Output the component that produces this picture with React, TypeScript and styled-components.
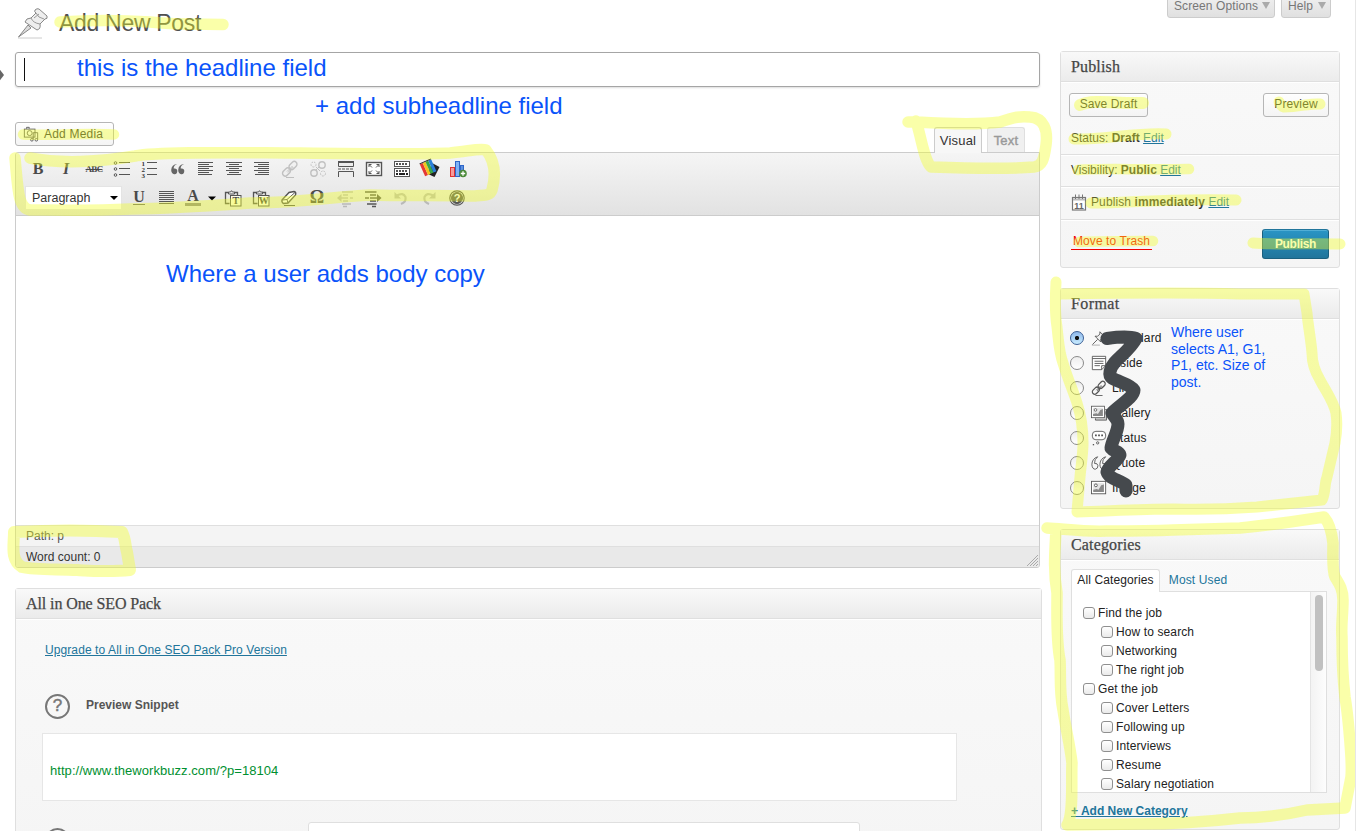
import React from "react";
import styled, { createGlobalStyle, css } from "styled-components";

const Global = createGlobalStyle`
  * { box-sizing: border-box; }
  html, body { margin: 0; padding: 0; background: #fff; overflow: hidden; }
  body { font-family: "Liberation Sans", Arial, sans-serif; font-size: 12px; color: #333; }
`;

const Page = styled.div`
  position: relative;
  display: flex;
  width: 1356px;
  height: 831px;
  padding-left: 15px;
  overflow: hidden;
  border-right: 1px solid #e6e6e6;
  white-space: nowrap;
`;
const Main = styled.main`
  width: 1027px;
  flex: none;
  display: flex;
  flex-direction: column;
`;
const Side = styled.aside`
  width: 280px;
  flex: none;
  margin-left: 18px;
  display: flex;
  flex-direction: column;
`;

/* Page heading */
const Heading = styled.header`
  display: flex;
  height: 52px;
  padding: 7px 0 0 2px;
  flex: none;
`;
const H1 = styled.h1`
  margin: 0 0 0 10px;
  font: 400 23px/32px "Liberation Sans", sans-serif;
  letter-spacing: -0.3px;
  color: #505050;
`;
const TitleField = styled.div`
  width: 1025px;
  height: 35px;
  flex: none;
  border: 1px solid #a5a5a5;
  border-radius: 3px;
  box-shadow: 0 1px 2px #ddd;
  padding: 5px 8px;
`;
const Caret = styled.div`
  width: 1px;
  height: 23px;
  background: #111;
`;

const EditorTop = styled.div`
  width: 1025px;
  height: 65px;
  flex: none;
  display: flex;
  align-items: flex-end;
  justify-content: space-between;
  padding-right: 15px;
`;
const Button = styled.button<{ $w: number }>`
  display: flex;
  align-items: center;
  justify-content: center;
  gap: 5px;
  width: ${(p) => p.$w}px;
  height: 24px;
  padding: 0;
  border: 1px solid #b6b6b6;
  border-radius: 3px;
  background: linear-gradient(#fefefe, #f4f4f4);
  box-shadow: inset 0 1px 0 #fff;
  font: 12px "Liberation Sans", sans-serif;
  letter-spacing: 0.05px;
  color: #333;
  svg { overflow: visible; }
`;
const MediaSlot = styled.div`
  height: 30px;
`;
const MediaButton = styled(Button)`
  justify-content: flex-start;
  padding-left: 7px;
  letter-spacing: 0.2px;
`;
const Tabs = styled.div`
  display: flex;
  align-items: flex-end;
  gap: 5px;
`;
const Tab = styled.div<{ $active?: boolean }>`
  width: ${(p) => (p.$active ? 48 : 38)}px;
  height: ${(p) => (p.$active ? 26 : 25)}px;
  margin-bottom: ${(p) => (p.$active ? -1 : 0)}px;
  position: relative;
  border: 1px solid ${(p) => (p.$active ? "#ccc" : "#dfdfdf")};
  border-bottom: 0;
  border-radius: 3px 3px 0 0;
  background: ${(p) => (p.$active ? "#f7f7f7" : "#f0f0f0")};
  color: ${(p) => (p.$active ? "#333" : "#999")};
  font-size: 13px;
  letter-spacing: 0.2px;
  -webkit-text-stroke: ${(p) => (p.$active ? 0 : 0.4)}px #999;
  line-height: 26px;
  text-align: center;
`;

/* Editor */
const Editor = styled.section`
  width: 1025px;
  height: 416px;
  flex: none;
  display: flex;
  flex-direction: column;
  border: 1px solid #ccc;
  border-radius: 3px 0 3px 3px;
  overflow: hidden;
`;
const Toolbar = styled.div`
  height: 63px;
  flex: none;
  padding: 1px 0 0 8px;
  border-bottom: 1px solid #ccc;
  background: linear-gradient(#f5f5f5, #e2e2e2);
`;
const ToolRow = styled.div`
  display: flex;
  align-items: center;
  height: 29px;
`;
const Cell = styled.span<{ $w?: number; $dim?: boolean }>`
  width: ${(p) => p.$w ?? 28}px;
  height: 24px;
  display: flex;
  align-items: center;
  justify-content: center;
  opacity: ${(p) => (p.$dim ? 0.3 : 1)};
  svg { overflow: visible; }
`;
const Glyph = styled.span<{ $italic?: boolean; $size?: number; $under?: boolean; $strike?: boolean }>`
  font: ${(p) => (p.$italic ? "italic" : "normal")} bold ${(p) => p.$size ?? 16}px "Liberation Serif", serif;
  color: #4a4a4a;
  ${(p) => p.$under && css`line-height: 14px; border-bottom: 1px solid #666;`}
  ${(p) => p.$strike && css`text-decoration: line-through; letter-spacing: -0.7px;`}
`;
const Select = styled.div`
  width: 97px;
  height: 24px;
  margin: 0 3px 0 1px;
  padding: 0 3px 0 6px;
  display: flex;
  align-items: center;
  justify-content: space-between;
  border: 1px solid #e4e4e4;
  background: #fff;
  font-size: 12.500px;
`;
const Body = styled.div`
  flex: 1;
  background: #fff;
`;
const PathBar = styled.div`
  height: 21px;
  padding-left: 10px;
  border-top: 1px solid #dfdfdf;
  background: #f4f4f4;
  line-height: 20px;
  color: #555;
`;
const CountBar = styled.div`
  height: 21px;
  padding-left: 10px;
  display: flex;
  justify-content: space-between;
  align-items: flex-end;
  border-top: 1px solid #dfdfdf;
  background: #e9e9e9;
  line-height: 19px;
`;

/* Boxes */
const Box = styled.section<{ $h: number; $mt?: number }>`
  height: ${(p) => p.$h}px;
  margin-top: ${(p) => p.$mt ?? 0}px;
  flex: none;
  display: flex;
  flex-direction: column;
  border: 1px solid #dfdfdf;
  border-radius: 3px;
  background: linear-gradient(#f9f9f9, #f5f5f5);
`;
const BoxTitle = styled.h3<{ $ls?: number }>`
  margin: 0;
  height: 30px;
  flex: none;
  padding-left: 10px;
  border-bottom: 1px solid #dfdfdf;
  box-shadow: 0 1px 0 #fff;
  background: linear-gradient(#f9f9f9, #ebebeb);
  font: 16px/30px "Liberation Serif", serif;
  letter-spacing: ${(p) => p.$ls ?? 0.15}px;
  -webkit-text-stroke: 0.25px #464646;
  color: #464646;
`;
const Link = styled.a<{ $bold?: boolean; $ls?: number }>`
  color: #21759b;
  text-decoration: underline;
  font-weight: ${(p) => (p.$bold ? "bold" : "normal")};
  letter-spacing: ${(p) => p.$ls ?? 0}px;
`;

const SeoBody = styled.div`
  display: flex;
  flex-direction: column;
  align-items: flex-start;
  padding: 24px 0 0 29px;
`;
const SnippetHead = styled.div`
  display: flex;
  align-items: center;
  gap: 16px;
  height: 26px;
  margin-top: 36px;
  font-weight: bold;
  color: #555;
`;
const SnippetLabel = styled.span`
  padding-bottom: 2px;
`;
const Help = styled.span`
  width: 25px;
  height: 25px;
  display: flex;
  align-items: center;
  justify-content: center;
  border: 2px solid #777;
  border-radius: 50%;
  font: 17px "Liberation Sans", sans-serif;
  -webkit-text-stroke: 0.5px #777;
  color: #777;
`;
const Snippet = styled.div`
  width: 915px;
  height: 68px;
  margin: 14px 0 0 -3px;
  padding: 3px 0 0 7px;
  border: 1px solid #e6e6e6;
  background: #fff;
  color: #009030;
  font-size: 13px;
  letter-spacing: 0.05px;
  line-height: 68px;
`;
const NextRow = styled.div`
  display: flex;
  align-items: flex-start;
  margin-top: 21px;
`;
const NextField = styled.div`
  width: 552px;
  height: 30px;
  margin-left: 238px;
  border: 1px solid #dfdfdf;
  border-radius: 3px;
  background: #fff;
`;
const NextHelp = styled.div`
  padding-top: 6px;
`;

/* Sidebar */
const ScreenLinks = styled.nav`
  display: flex;
  gap: 6px;
  justify-content: flex-end;
  height: 51px;
  padding-right: 9px;
`;
const ScreenLink = styled.div<{ $w: number }>`
  width: ${(p) => p.$w}px;
  height: 22px;
  margin-top: -4px;
  display: flex;
  align-items: center;
  justify-content: space-between;
  padding: 0 4px 3px 6px;
  border: 1px solid #ccc;
  border-radius: 0 0 3px 3px;
  background: linear-gradient(#efefef, #e0e0e0);
  color: #777;
  letter-spacing: 0.1px;
`;
const Arrow = styled.i<{ $c: string; $s?: number }>`
  border: ${(p) => p.$s ?? 4}px solid transparent;
  border-top: ${(p) => (p.$s ? p.$s : 7)}px solid ${(p) => p.$c};
  border-bottom: 0;
`;
const Actions = styled.div`
  display: flex;
  justify-content: space-between;
  padding: 11px 10px 0 8px;
  height: 41px;
  button { padding-bottom: 2px; letter-spacing: 0.1px; }
`;
const Info = styled.div<{ $h: number }>`
  display: flex;
  align-items: center;
  gap: 4px;
  height: ${(p) => p.$h}px;
  padding: 0 0 2px 10px;
  border-bottom: 1px solid #dfdfdf;
  box-shadow: 0 1px 0 #fff;
`;
const Schedule = styled.span`
  letter-spacing: 0.1px;
`;
const Final = styled.div`
  display: flex;
  align-items: flex-start;
  justify-content: space-between;
  padding: 9px 10px 0 10px;
`;
const Trash = styled.a`
  margin-top: 4px;
  padding: 0 2px;
  height: 17px;
  line-height: 16px;
  letter-spacing: 0.08px;
  border-bottom: 1px solid #f00000;
  color: #f00000;
`;
const Primary = styled.button`
  width: 67px;
  height: 30px;
  padding: 0;
  border: 1px solid #1b607f;
  border-top-color: #21759b;
  border-radius: 3px;
  background: linear-gradient(#2a95c5, #21759b);
  box-shadow: inset 0 1px 0 rgba(120, 200, 230, 0.5);
  font: bold 12px "Liberation Sans", sans-serif;
  letter-spacing: -0.3px;
  color: #fff;
`;
const Formats = styled.div`
  display: flex;
  flex-direction: column;
  padding: 6px 0 0 9px;
`;
const FormatRow = styled.label`
  display: flex;
  align-items: center;
  height: 25px;
  color: #222;
  letter-spacing: 0.1px;
`;
const Radio = styled.span<{ $on?: boolean }>`
  width: 14px;
  height: 14px;
  margin-right: 7px;
  border: 1px solid ${(p) => (p.$on ? "#3c5f95" : "#8a8a8a")};
  border-radius: 50%;
  background: ${(p) =>
    p.$on
      ? "radial-gradient(circle, #111 0 1.7px, transparent 2.5px), linear-gradient(#8fb8ea, #c8ecff)"
      : "linear-gradient(#eee, #fff)"};
`;
const FormatLabel = styled.span`
  margin-left: 5px;
`;
const CatTabs = styled.div`
  display: flex;
  height: 23px;
  margin: 9px 0 0 10px;
`;
const CatTab = styled.div<{ $active?: boolean }>`
  position: relative;
  z-index: 1;
  height: 23px;
  line-height: ${(p) => (p.$active ? 21 : 23)}px;
  width: ${(p) => (p.$active ? 89 : 76)}px;
  text-align: center;
  letter-spacing: 0.12px;
  color: ${(p) => (p.$active ? "#222" : "#21759b")};
  ${(p) => p.$active && css`border: 1px solid #dfdfdf; border-bottom: 0; border-radius: 3px 3px 0 0; background: #fff;`}
`;
const CatPanel = styled.div`
  display: flex;
  justify-content: space-between;
  width: 256px;
  height: 202px;
  margin: -1px 0 0 10px;
  border: 1px solid #dfdfdf;
  background: #fff;
  overflow: hidden;
`;
const CatList = styled.div`
  padding: 11px 0 0 11px;
`;
const CatRow = styled.label<{ $child?: boolean }>`
  display: flex;
  align-items: center;
  height: 19px;
  gap: 3px;
  padding-left: ${(p) => (p.$child ? 18 : 0)}px;
  color: #222;
  letter-spacing: 0.11px;
`;
const Check = styled.span`
  width: 12px;
  height: 12px;
  border: 1px solid #8f8f8f;
  border-radius: 3px;
  background: linear-gradient(#fff, #eaeaea);
`;
const Scroll = styled.div`
  width: 16px;
  padding: 3px 0 0 4px;
  border-left: 1px solid #e4e4e4;
  background: linear-gradient(90deg, #f3f3f3, #fdfdfd);
`;
const Thumb = styled.div`
  width: 8px;
  height: 76px;
  border-radius: 4px;
  background: #c1c1c1;
`;
const AddCat = styled.div`
  padding: 11px 0 0 10px;
`;

/* Annotations */
const Note = styled.div<{ $x: number; $y: number; $size: number; $lh: number }>`
  position: absolute;
  left: ${(p) => p.$x}px;
  top: ${(p) => p.$y}px;
  font-size: ${(p) => p.$size}px;
  line-height: ${(p) => p.$lh}px;
  color: #0a53fa;
  white-space: pre;
`;
const Ink = styled.svg`
  position: absolute;
  left: 0;
  top: 0;
  pointer-events: none;
`;

const Ico = ({ children, s = 18 }: { children: React.ReactNode; s?: number }) => (
  <svg width={s} height={s} viewBox="0 0 18 18" fill="none" stroke="#555" strokeWidth="1">
    {children}
  </svg>
);
const Lines = ({ rows }: { rows: [number, number][] }) => (
  <Ico>
    {rows.map(([a, b], i) => (
      <path key={i} d={`M${a} ${2.5 + i * 2}H${b}`} />
    ))}
  </Ico>
);
const full: [number, number] = [1, 16];
const LinkShape = () => (
  <>
    <rect x="-4.5" y="-2.7" width="9" height="5.4" rx="2.7" transform="translate(12 5.5) rotate(-45)" strokeWidth="1.4" />
    <rect x="-4.5" y="-2.7" width="9" height="5.4" rx="2.7" transform="translate(5.5 12) rotate(-45)" strokeWidth="1.4" />
    <path d="M6 11.5 11.5 6M7 12.4 12.4 7M5 17.5H13" />
  </>
);
const PinShape = () => (
  <>
    <path d="M10 2 16 8 13.5 8 11 10.5 11 13.5 4.5 7 7.5 7 10 4.5Z" fill="#eee" />
    <path d="M7.5 10.5 1.5 16.5" />
    <path d="M1 17h9" stroke="#aaa" />
  </>
);
const Clip = ({ t }: { t: string }) => (
  <Ico>
    <path d="M5.500 14.500H1.500V3.500H4.500M10 3.500h3.500V6" strokeWidth="1.300" />
    <path d="M4.500 5V3h2Q7.500 .3 8.500 3h2V5Z" fill="#eee" />
    <rect x="6.500" y="6.500" width="10.500" height="10.500" fill="#fafae8" />
    <text x="11.800" y="15" textAnchor="middle" fontSize="10" fontWeight="bold" fontFamily="Liberation Serif" fill="#444" stroke="none">{t}</text>
  </Ico>
);
const Picture = () => (
  <>
    <rect x="0.500" y="1.500" width="16" height="14" fill="#fff" />
    <rect x="2.500" y="3.500" width="12" height="10" fill="#e4e4e4" stroke="none" />
    <circle cx="5.500" cy="6" r="1.600" fill="#fff" />
    <path d="M2.500 13.500V11l4-1 2 1 3-5 3-1v8.500Z" fill="#888" stroke="none" />
  </>
);

const firstRow = () => (
  <ToolRow>
    <Cell><Glyph>B</Glyph></Cell>
    <Cell><Glyph $italic>I</Glyph></Cell>
    <Cell><Glyph $size={9} $strike>ABC</Glyph></Cell>
    <Cell>
      <Ico>
        {[3, 9, 15].map((y) => (
          <g key={y}><circle cx="2.500" cy={y} r="1.300" /><path d={`M6 ${y - 0.5}H17`} /></g>
        ))}
      </Ico>
    </Cell>
    <Cell>
      <Ico>
        {[1, 2, 3].map((n) => (
          <g key={n}>
            <text x="0.500" y={n * 6 - 0.5} fontSize="7" fontWeight="bold" fontFamily="Liberation Serif" fill="#333" stroke="none">{n}</text>
            <path d={`M6 ${n * 6 - 3.5}H16`} />
          </g>
        ))}
      </Ico>
    </Cell>
    <Cell>
      <Ico>
        <g fill="#666" stroke="none">
          <path d="M8.300 4Q4.500 5 4.700 8.500Q8.300 8 8.300 11Q8 14.500 5.200 14.200Q2.200 13.500 2.200 10Q2.500 4.500 8.300 4Z" />
          <path d="M15.300 4Q11.500 5 11.700 8.500Q15.300 8 15.300 11Q15 14.500 12.200 14.200Q9.200 13.500 9.200 10Q9.500 4.500 15.300 4Z" />
        </g>
      </Ico>
    </Cell>
    <Cell><Lines rows={[[1, 16], [1, 12], [1, 16], [1, 12], [1, 16], [1, 12], [1, 15]]} /></Cell>
    <Cell><Lines rows={[[1, 17], [4, 14], [1, 17], [4, 14], [1, 17], [4, 14], [2, 16]]} /></Cell>
    <Cell><Lines rows={[[1, 16], [5, 16], [1, 16], [5, 16], [1, 16], [5, 16], [2, 16]]} /></Cell>
    <Cell $dim><Ico><LinkShape /></Ico></Cell>
    <Cell $dim>
      <Ico>
        <circle cx="13" cy="5" r="3.200" strokeWidth="1.400" /><circle cx="5" cy="13" r="3.200" strokeWidth="1.400" />
        <circle cx="4.500" cy="4.500" r="2.500" strokeDasharray="2 1" /><circle cx="14" cy="13.500" r="2.500" strokeDasharray="2 1" />
        <path d="m7 7 4 4M7 10l3-3" />
      </Ico>
    </Cell>
    <Cell>
      <Ico>
        <path d="M1.500 1V6.500H16.500V1M1.500 17V11.500H16.500V17" fill="#eee" />
        <path d="M1 2H17" strokeWidth="2" /><path d="M1 9H17" strokeDasharray="3 1" />
      </Ico>
    </Cell>
    <Cell>
      <Ico>
        <rect x="1.500" y="2.500" width="15" height="13" strokeWidth="1.400" fill="#fff" />
        <path d="M4 7V4.500H6.500M4 4.500 7 7.500M14 7V4.500H11.500M14 4.500 11 7.500M4 11V13.500H6.500M4 13.500 7 10.500M14 11V13.500H11.500M14 13.500 11 10.500" />
      </Ico>
    </Cell>
    <Cell>
      <Ico>
        <rect x="1.500" y="1.500" width="15" height="5" fill="#fff" />
        <rect x="1.500" y="8.500" width="15" height="8" fill="#fff" />
        <path d="M3 4H15M3 11H15" strokeWidth="2" strokeDasharray="2 1" />
        <path d="M3 14H5M6 14H12M13 14H15" stroke="#222" strokeWidth="2" />
      </Ico>
    </Cell>
    <Cell>
      <svg width="20" height="20" viewBox="0 0 20 20">
        <path d="M12 4 19.500 8 14.500 18 8 15Z" fill="#222" />
        <g transform="rotate(-24 9 10)">
          <rect x="2.500" y="2" width="3.200" height="13" fill="#e53935" />
          <rect x="5.700" y="2" width="3" height="13" fill="#f2c51e" />
          <rect x="8.700" y="2" width="3" height="13" fill="#38a84a" />
          <rect x="11.700" y="2" width="3.200" height="13" fill="#2b7fd8" />
          <path d="M2.500 1.500H14.900" stroke="#222" />
        </g>
      </svg>
    </Cell>
    <Cell>
      <svg width="18" height="18" viewBox="0 0 18 18">
        <rect x="1.500" y="7.500" width="4" height="9" fill="#f79a9a" stroke="#d33" />
        <rect x="6.500" y="1.500" width="4" height="15" fill="#7fb2f5" stroke="#2f66c8" />
        <rect x="11.500" y="5.500" width="3" height="8" fill="#5c91e0" stroke="#2f66c8" />
        <circle cx="14" cy="13.500" r="3.800" fill="#4c8a3a" /><path d="M14 11.300v4.400M11.800 13.500h4.400" stroke="#fff" strokeWidth="1.300" />
      </svg>
    </Cell>
  </ToolRow>
);

const secondRow = () => (
  <ToolRow>
    <Select>Paragraph<Arrow $c="#000" $s={4} /></Select>
    <Cell><Glyph $under>U</Glyph></Cell>
    <Cell><Lines rows={[full, full, full, full, full, full, full]} /></Cell>
    <Cell $w={38}>
      <Ico>
        <text x="9" y="12" textAnchor="middle" fontSize="16" fontWeight="bold" fontFamily="Liberation Serif" fill="#4a4a4a" stroke="none">A</text>
        <path d="M1 15.500H17" stroke="#888" strokeWidth="3" />
      </Ico>
      <svg width="14" height="18" viewBox="0 0 14 18"><path d="M6 7.500h8l-4 4Z" fill="#000" /></svg>
    </Cell>
    <Cell><Clip t="T" /></Cell>
    <Cell><Clip t="W" /></Cell>
    <Cell>
      <Ico>
        <path d="M2 11 9 3.500 14 2.500Q16.500 3 15.500 6L8 14 3.500 14.500Q1.500 13.500 2 11Z" fill="#fff" strokeWidth="1.400" /><path d="M2.500 11 7 10.500 8 14M7 10.500 15 3.500M4 16.500H15" />
      </Ico>
    </Cell>
    <Cell><Glyph $size={18}>Ω</Glyph></Cell>
    <Cell $dim>
      <Ico>
        <path d="M6 3H17M7 6H12M4 9H12M14 9H17M7 12H12M6 15H15M7 17.500H11" strokeWidth="1.600" />
        <path d="M5.500 5 1 9 5.500 13Z" fill="#555" stroke="none" />
      </Ico>
    </Cell>
    <Cell>
      <Ico>
        <path d="M1 3H12.500M6 6H12M1 9H5M6 9H15M6 12H12M3 15H12.500M8 17.500H12" strokeWidth="1.600" />
        <path d="M13 5 17.500 9 13 13Z" fill="#555" stroke="none" />
      </Ico>
    </Cell>
    <Cell $dim><Ico><path d="M5 6.500Q11 3 13.500 8Q14.500 13 9 15" strokeWidth="2.200" /><path d="M2.500 3V9.500H9Z" fill="#555" stroke="none" /></Ico></Cell>
    <Cell $dim><Ico><path d="M13 6.500Q7 3 4.500 8Q3.500 13 9 15" strokeWidth="2.200" /><path d="M15.500 3V9.500H9Z" fill="#555" stroke="none" /></Ico></Cell>
    <Cell>
      <Ico>
        <circle cx="9" cy="9" r="7.200" strokeWidth="1.200" /><circle cx="9" cy="9" r="5.500" fill="#555" />
        <text x="9" y="12.800" textAnchor="middle" fontSize="11" fontWeight="bold" fontFamily="Liberation Sans" fill="#fff" stroke="none">?</text>
      </Ico>
    </Cell>
  </ToolRow>
);

const formats: [string, React.ReactNode][] = [
  ["Standard", <PinShape />],
  ["Aside", <><path d="M1.500 1.500H16.500V12L12 16.500H1.500Z" fill="#fff" /><path d="M1.500 4H16.500M4 7H14M4 9.500H14M4 12H10M12 16.500V12H16.500" /></>],
  ["Link", <LinkShape />],
  ["Gallery", <><path d="M5 15V17H17.500V5H16" fill="#ccc" /><g transform="scale(.92)"><Picture /></g></>],
  ["Status", <><rect x="1.500" y="1.500" width="15" height="9.500" rx="4" fill="#fff" /><path d="M4.500 6h2M8 6h2M11.500 6h2" strokeWidth="2" /><circle cx="7.500" cy="14.500" r="1.300" /><path d="M2 16.500h1.500" strokeWidth="1.500" /></>],
  ["Quote", <><path d="M7.500 2Q1 4 1 11Q1.500 16 4.800 16Q7.800 15.500 7.800 12Q7.500 9 4 9.500Q3.500 5 7.500 2ZM16.500 2Q10 4 10 11Q10.500 16 13.800 16Q16.800 15.500 16.800 12Q16.500 9 13 9.500Q12.500 5 16.500 2Z" fill="#f8f8f8" /></>],
  ["Image", <Picture />],
];

const categories: [string, boolean][] = [
  ["Find the job", false], ["How to search", true], ["Networking", true], ["The right job", true],
  ["Get the job", false], ["Cover Letters", true], ["Following up", true], ["Interviews", true],
  ["Resume", true], ["Salary negotiation", true],
];

const highlights: [string, number][] = [
  ["M60 22C90 20 120 20 150 22C180 25 200 24 223 24.500", 11.5],
  ["M23 134.500C50 136 80 133 114 134.500", 10.5],
  ["M30 158C60 164 100 162 135 156C160 151 250 153 300 153C370 154 430 154 450 153C470 151 480 148 486 150C494 160 497 172 492 190C490 196 485 195 475 196C440 195 400 196 370 195C330 197 300 203 250 203C220 205 180 208 130 209C90 211 50 210 30 210C18 208 18 190 15 158", 11.5],
  ["M908 122L917 122C950 124 985 124 1000 122C1015 117 1020 116 1030 117C1044 118 1048 130 1046 145C1044 160 1042 166 1034 167C1010 169 960 168 931 167C924 160 922 140 916 121", 11.5],
  ["M1080 105C1095 99 1115 104 1143 103", 12],
  ["M1279 102Q1281 106 1284 107C1300 107 1310 103 1320 104", 11],
  ["M1074 139C1100 140 1140 132 1166 134", 11],
  ["M1078 170C1100 168 1140 170 1189 169", 10.5],
  ["M1091 203C1120 204 1160 198 1236 200", 11],
  ["M1079 242C1100 241 1130 241 1153 241", 10.5],
  ["M1253 243C1280 245 1310 243 1340 244", 11],
  ["M1056 282C1055 300 1055 315 1057 327C1059 345 1059 352 1063 363C1068 380 1073 390 1077 403C1081 415 1083 430 1083 443C1083 455 1081 465 1080 477L1077 512C1110 511 1140 509 1173 509C1205 510 1230 509 1257 507L1322 500C1326 492 1324 485 1327 477L1335 443C1337 432 1337 420 1336 413C1333 400 1325 390 1320 380C1314 370 1312 363 1312 353C1311 340 1308 325 1307 313L1304 294L1240 294C1180 292 1120 293 1060 294", 11],
  ["M1047 528C1065 529 1085 532 1107 531C1130 531 1150 531 1173 530L1240 528C1260 526 1275 524 1290 522L1324 517Q1331 525 1333 543C1333 555 1332 570 1335 577C1340 585 1343 590 1343 600C1343 615 1341 625 1342 637C1342 660 1343 680 1345 697C1348 715 1349 730 1350 743C1351 755 1352 767 1351 777L1345 808L1307 810C1285 815 1260 818 1240 818C1205 822 1170 824 1140 824L1067 825C1074 815 1071 780 1072 763C1070 745 1066 730 1063 710C1059 690 1061 675 1060 660C1056 640 1057 615 1057 593C1053 570 1055 550 1056 530", 11.5],
  ["M14 532C50 530 90 530 122 532C126 540 125 546 127 552L130 570C110 572 95 571 77 570C55 569 35 570 22 567C10 560 14 545 14 532", 12],
];

export default function App() {
  return (
    <>
      <Global />
      <Page>
        <Main>
          <Heading>
            <svg width="32" height="32" viewBox="0 0 32 32">
              <path d="M1 31h24" stroke="#ccc" /><path d="M11 18 1.500 30 14 21Z" fill="#ddd" stroke="#888" />
              <path d="M18 3Q20 1 22 2L30 9Q31 12 28 12L23 17Q24 22 20 23L8 15Q9 11 14 11L19 6Q17 5 18 3Z" fill="#eee" stroke="#888" />
              <path d="M19 6Q21 11 27 12M14 11Q16 16 23 17M17 11 22 7" stroke="#999" fill="none" />
            </svg>
            <H1>Add New Post</H1>
          </Heading>
          <TitleField><Caret /></TitleField>
          <EditorTop>
            <MediaSlot>
              <MediaButton $w={99}>
                <Ico s={16}>
                  <rect x="1.500" y="3.500" width="12" height="9" /><path d="M4 3V1.500H7V3" /><circle cx="7.500" cy="8" r="2.800" />
                  <path d="M11.500 15V7.500H16.500V15" fill="none" /><circle cx="10" cy="15.500" r="1.500" /><circle cx="15" cy="15.500" r="1.500" />
                </Ico>
                Add Media
              </MediaButton>
            </MediaSlot>
            <Tabs><Tab $active>Visual</Tab><Tab>Text</Tab></Tabs>
          </EditorTop>
          <Editor>
            <Toolbar>{firstRow()}{secondRow()}</Toolbar>
            <Body />
            <PathBar>Path: p</PathBar>
            <CountBar>
              <span>Word count: 0</span>
              <svg width="13" height="13" viewBox="0 0 13 13"><path d="M1 12 12 1M4 12l8-8M7 12l5-5M10 12l2-2" stroke="#aaa" /></svg>
            </CountBar>
          </Editor>
          <Box $h={260} $mt={20}>
            <BoxTitle $ls={-0.1}>All in One SEO Pack</BoxTitle>
            <SeoBody>
              <Link $ls={0.09}>Upgrade to All in One SEO Pack Pro Version</Link>
              <SnippetHead><Help>?</Help><SnippetLabel>Preview Snippet</SnippetLabel></SnippetHead>
              <Snippet>http://www.theworkbuzz.com/?p=18104</Snippet>
              <NextRow><NextHelp><Help /></NextHelp><NextField /></NextRow>
            </SeoBody>
          </Box>
        </Main>
        <Side>
          <ScreenLinks>
            <ScreenLink $w={108}>Screen Options<Arrow $c="#aaa" /></ScreenLink>
            <ScreenLink $w={50}>Help<Arrow $c="#aaa" /></ScreenLink>
          </ScreenLinks>
          <Box $h={217}>
            <BoxTitle>Publish</BoxTitle>
            <Actions><Button $w={79}>Save Draft</Button><Button $w={66}>Preview</Button></Actions>
            <Info $h={32}><span>Status: <b>Draft</b> <Link>Edit</Link></span></Info>
            <Info $h={32}><span>Visibility: <b>Public</b> <Link>Edit</Link></span></Info>
            <Info $h={33}>
              <svg width="16" height="17" viewBox="0 0 16 17" stroke="#777" fill="none">
                <rect x="1.500" y="3.500" width="13" height="12.500" fill="#fff" strokeWidth="1.200" /><path d="M2 5.500H14" stroke="#bbb" strokeWidth="2" /><path d="M4.500 .5V5M8 .5V5M11.500 .5V5" />
                <text x="8" y="14.500" textAnchor="middle" fontSize="9" fontWeight="bold" fontFamily="Liberation Sans" fill="#666" stroke="none">11</text>
              </svg>
              <Schedule>Publish <b>immediately</b> <Link>Edit</Link></Schedule>
            </Info>
            <Final><Trash>Move to Trash</Trash><Primary>Publish</Primary></Final>
          </Box>
          <Box $h={221} $mt={20}>
            <BoxTitle $ls={0.4}>Format</BoxTitle>
            <Formats>
              {formats.map(([name, icon], i) => (
                <FormatRow key={name}>
                  <Radio $on={i === 0} /><Ico s={16}>{icon}</Ico><FormatLabel>{name}</FormatLabel>
                </FormatRow>
              ))}
            </Formats>
          </Box>
          <Box $h={301} $mt={20}>
            <BoxTitle>Categories</BoxTitle>
            <CatTabs><CatTab $active>All Categories</CatTab><CatTab>Most Used</CatTab></CatTabs>
            <CatPanel>
              <CatList>
                {categories.map(([name, child]) => (
                  <CatRow key={name} $child={child}><Check />{name}</CatRow>
                ))}
              </CatList>
              <Scroll><Thumb /></Scroll>
            </CatPanel>
            <AddCat><Link $bold>+ Add New Category</Link></AddCat>
          </Box>
        </Side>
        <Ink width="1356" height="831" viewBox="0 0 1356 831" fill="none" strokeLinecap="round" strokeLinejoin="round">
          <path d="M-2 67 4 75-2 83Z" fill="#666" />
          <path d="M1107 338.500C1118 337 1130 336.500 1136 338.500C1132 347 1122 355 1115 362C1110 368 1108 375 1112 378C1118 382 1130 384 1134 390C1134 397 1120 405 1112 413C1114 417 1118 419 1118 424C1118 432 1112 440 1111 448C1114 452 1119 451 1120 455C1118 461 1108 466 1107 472C1109 479 1120 480 1126 485L1126 491" stroke="#45494d" strokeWidth="13" />
          {highlights.map(([d, w], i) => (
            <path key={i} d={d} strokeWidth={w} stroke="#f2ff28" strokeOpacity="0.4" />
          ))}
        </Ink>
        <Note $x={77} $y={54} $size={24} $lh={28}>this is the headline field</Note>
        <Note $x={315} $y={92} $size={24} $lh={28}>+ add subheadline field</Note>
        <Note $x={166} $y={260} $size={24} $lh={28}>Where a user adds body copy</Note>
        <Note $x={1171} $y={324} $size={14} $lh={16.7}>{"Where user\nselects A1, G1,\nP1, etc. Size of\npost."}</Note>
      </Page>
    </>
  );
}
